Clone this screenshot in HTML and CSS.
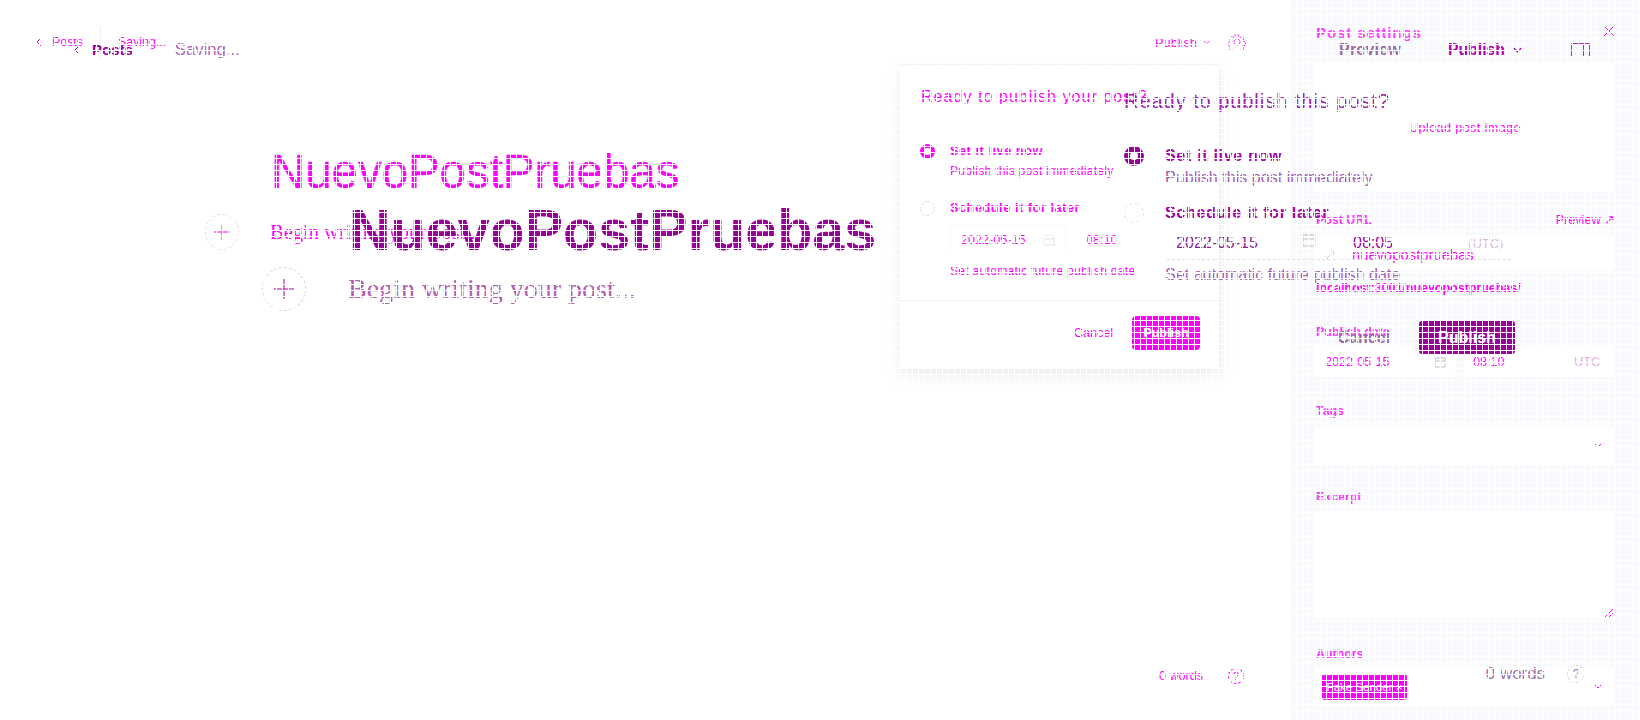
FILE: index.html
```html
<!DOCTYPE html>
<html lang="en">
<head>
<meta charset="utf-8">
<title>Post editor diff</title>
<link rel="stylesheet" href="styles.css">
</head>
<body>
<div class="stage">

  <!-- First rendering -->
  <div class="layer app-a">
    <main class="editor-a">
      <header class="bar-a">
        <svg class="back-a" viewBox="0 0 6 10" width="6" height="10"><path d="M5 1 1 5l4 4" fill="none" stroke="currentColor"/></svg>
        <span class="posts-a">Posts</span>
        <span class="sep-a"></span>
        <span class="saving-a">Saving...</span>
        <span class="spacer"></span>
        <span class="publish-a">Publish</span>
        <svg class="chev-a" viewBox="0 0 8 5" width="7" height="5"><path d="M1 1l3 3 3-3" fill="none" stroke="currentColor"/></svg>
        <svg class="gear-a" viewBox="0 0 18 18" width="18" height="18"><g fill="none" stroke="currentColor" stroke-dasharray="2 1"><circle cx="9" cy="9" r="3"/><path d="M7.5 1.5h3l.5 2 1.8.8 1.8-1 2 2.1-1 1.8.8 1.8 1.6.5v3l-1.9.5-.7 1.8 1 1.8-2 2-1.8-1-1.8.7-.5 1.7h-3l-.5-1.8-1.8-.7-1.8 1-2-2 1-1.8-.7-1.8-1.8-.5v-3l1.8-.5.7-1.8-1-1.8 2-2 1.8 1 1.8-.8z" transform="translate(.2 .2) scale(.96)"/></g></svg>
      </header>
      <h1 class="title-a">NuevoPostPruebas</h1>
      <div class="prompt-a">
        <span class="plus plus-a"><svg viewBox="0 0 16 16" width="16" height="16"><path d="M8 0v16M0 8h16" stroke="currentColor"/></svg></span>
        <span class="begin-a">Begin writing your post...</span>
      </div>
      <footer class="count-a">
        <span>0 words</span>
        <span class="help help-a">?</span>
      </footer>
    </main>

    <aside class="settings">
      <header class="set-head">
        <h2 class="set-title">Post settings</h2>
        <svg class="close" viewBox="0 0 12 12" width="12" height="12"><path d="M1 1l10 10M11 1 1 11" stroke="currentColor"/></svg>
      </header>
      <div class="box box-image"><span>Upload post image</span></div>

      <div class="label-row gap-url"><span class="label">Post URL</span><span class="label-link">Preview ↗</span></div>
      <div class="box box-url">
        <svg class="link-icon" viewBox="0 0 12 12" width="12" height="12"><path d="M2 10l8-8M1 7l4 4M7 1l4 4" stroke="#c8c8c8" fill="none"/></svg>
        <span>nuevopostpruebas</span>
      </div>
      <p class="helper">localhost:3001/nuevopostpruebas/</p>

      <div class="label-row gap-date"><span class="label">Publish date</span></div>
      <div class="date-pair">
        <div class="box box-date">
          <span>2022-05-15</span>
          <svg class="cal" viewBox="0 0 12 12" width="12" height="12"><path d="M1 2h10v9H1zM1 5h10M4 1v2M8 1v2" fill="none" stroke="#c4c4c4"/></svg>
        </div>
        <div class="box box-time"><span>08:10</span><span class="utc">UTC</span></div>
      </div>

      <div class="label-row gap-tags"><span class="label">Tags</span></div>
      <div class="box box-tags">
        <svg class="chev-field" viewBox="0 0 8 5" width="8" height="5"><path d="M1 1l3 3 3-3" fill="none" stroke="currentColor"/></svg>
      </div>

      <div class="label-row gap-excerpt"><span class="label">Excerpt</span></div>
      <div class="box box-excerpt">
        <svg class="grip" viewBox="0 0 8 8" width="8" height="8"><path d="M8 0 0 8M8 4 4 8" stroke="currentColor"/></svg>
      </div>

      <div class="label-row gap-authors"><span class="label">Authors</span></div>
      <div class="box box-authors">
        <span class="author-tag">Fake Sender <span class="tag-x">×</span></span>
        <svg class="chev-field" viewBox="0 0 8 5" width="8" height="5"><path d="M1 1l3 3 3-3" fill="none" stroke="currentColor"/></svg>
      </div>
    </aside>

    <section class="modal-a">
      <h3 class="modal-a-title">Ready to publish your post?</h3>
      <div class="modal-a-body">
        <div class="opt-a opt-a-live">
          <span class="radio-a on"></span>
          <div>
            <div class="opt-a-title">Set it live now</div>
            <div class="opt-a-desc">Publish this post immediately</div>
          </div>
        </div>
        <div class="opt-a opt-a-later">
          <span class="radio-a"></span>
          <div>
            <div class="opt-a-title">Schedule it for later</div>
            <div class="sched-a">
              <div class="sched-a-date"><span>2022-05-15</span><svg class="cal" viewBox="0 0 12 12" width="12" height="12"><path d="M1 2h10v9H1zM1 5h10M4 1v2M8 1v2" fill="none" stroke="#dcdcdc"/></svg></div>
              <div class="sched-a-time">08:10</div>
            </div>
            <div class="opt-a-desc">Set automatic future publish date</div>
          </div>
        </div>
      </div>
      <div class="modal-a-foot">
        <span class="cancel-a">Cancel</span>
        <span class="btn-a">Publish</span>
      </div>
    </section>
  </div>

  <!-- Second rendering, laid over the first -->
  <div class="layer app-b">
    <header class="bar-b">
      <svg class="back-b" viewBox="0 0 6 10" width="6" height="10"><path d="M5 1 1 5l4 4" fill="none" stroke="currentColor"/></svg>
      <span class="posts-b">Posts</span>
      <span class="saving-b">Saving...</span>
      <span class="spacer"></span>
      <span class="preview-b">Preview</span>
      <span class="publish-b">Publish</span>
      <svg class="chev-b" viewBox="0 0 10 6" width="9" height="6"><path d="M1 1l4 4 4-4" fill="none" stroke="currentColor" stroke-width="1.5"/></svg>
      <svg class="panel-b" viewBox="0 0 19 14" width="19" height="14"><path d="M.5.5h18v13H.5zM12.5.5v13" fill="none" stroke="currentColor"/></svg>
    </header>
    <h1 class="title-b">NuevoPostPruebas</h1>
    <div class="prompt-b">
      <span class="plus plus-b"><svg viewBox="0 0 20 20" width="20" height="20"><path d="M10 0v20M0 10h20" stroke="currentColor"/></svg></span>
      <span class="begin-b">Begin writing your post...</span>
    </div>
    <footer class="count-b">
      <span>0 words</span>
      <span class="help help-b">?</span>
    </footer>

    <section class="modal-b">
      <h3 class="modal-b-title">Ready to publish this post?</h3>
      <div class="opt-b opt-b-live">
        <span class="radio-b on"></span>
        <div>
          <div class="opt-b-title">Set it live now</div>
          <div class="opt-b-desc">Publish this post immediately</div>
        </div>
      </div>
      <div class="opt-b opt-b-later">
        <span class="radio-b"></span>
        <div class="opt-b-main">
          <div class="opt-b-title">Schedule it for later</div>
          <div class="sched-b">
            <span class="sched-b-date">2022-05-15</span>
            <svg class="cal-b" viewBox="0 0 14 14" width="14" height="14"><path d="M1 2h12v11H1zM1 6h12M4 1v2M10 1v2" fill="none" stroke="#c4c4c4"/></svg>
            <span class="sched-b-time">08:05</span>
            <span class="sched-b-utc">(UTC)</span>
          </div>
          <div class="opt-b-desc">Set automatic future publish date</div>
        </div>
      </div>
      <div class="modal-b-foot">
        <span class="cancel-b">Cancel</span>
        <span class="btn-b">Publish</span>
      </div>
    </section>
  </div>

  <div class="grid-mask"></div>
</div>
</body>
</html>
```

FILE: styles.css
```css
* { box-sizing: border-box; }
html, body { margin: 0; padding: 0; background: #fff; }
h1, h2, h3, p { margin: 0; font-weight: 400; }

.stage {
  position: relative;
  width: 1640px;
  height: 720px;
  overflow: hidden;
  font-family: "Liberation Sans", Arial, sans-serif;
  background: #fff;
}
.layer { position: absolute; inset: 0; }
.spacer { flex: 1; }

.grid-mask {
  position: absolute;
  inset: 0;
  pointer-events: none;
  background-image:
    linear-gradient(to right, #fff 1px, transparent 1px),
    linear-gradient(to bottom, #fff 1px, transparent 1px);
  background-size: 6px 6px;
  background-position: 0 2px;
}

/* ---------- first rendering ---------- */
.app-a { display: flex; color: #f0f; }
.editor-a { width: 1291px; display: flex; flex-direction: column; }

.bar-a {
  height: 84px;
  display: flex;
  align-items: center;
  padding: 0 45px 0 36px;
  font-size: 12.4px;
}
.back-a { margin-right: 10px; }
.sep-a { width: 1px; height: 35px; background: #e3edf5; margin: 0 17px 0 17px; }
.publish-a { font-size: 12.8px; }
.chev-a { margin: 0 0 0 6px; }
.gear-a { margin-left: 18px; }

.title-a {
  margin: 60px 0 0 271px;
  font-size: 47.4px;
  line-height: 56px;
  -webkit-text-stroke: .4px #f0f;
}
.prompt-a { display: flex; align-items: center; margin: 14px 0 0 205px; }
.plus {
  display: flex;
  align-items: center;
  justify-content: center;
  border-radius: 50%;
  border: 1px dashed #dcdcdc;
}
.plus-a { width: 34px; height: 36px; }
.begin-a {
  margin-left: 31px;
  font-family: "Liberation Serif", "Times New Roman", serif;
  font-size: 20.5px;
}
.count-a {
  margin-top: auto;
  display: flex;
  align-items: center;
  justify-content: flex-end;
  gap: 25px;
  padding: 0 47px 36px 0;
  font-size: 12.6px;
}
.help {
  display: flex;
  align-items: center;
  justify-content: center;
  border-radius: 50%;
  border: 1px dashed currentColor;
}
.help-a { width: 16px; height: 16px; font-size: 11px; }

/* settings panel */
.settings {
  width: 349px;
  padding: 0 25px 0 24px;
  background: #f8f9fc;
  display: flex;
  flex-direction: column;
}
.set-head {
  height: 63px;
  flex: none;
  display: flex;
  justify-content: space-between;
  padding: 25px 0 0 1px;
}
.set-title { font-size: 15.2px; line-height: 15px; font-weight: 700; letter-spacing: .8px; color: #f4f; }
.close { margin-top: 0; }
.box {
  flex: none;
  background: #fff;
  border-radius: 3px;
  display: flex;
  align-items: center;
  font-size: 12.6px;
}
.label-row {
  flex: none;
  display: flex;
  justify-content: space-between;
  padding-left: 1px;
  line-height: 16px;
  font-size: 12.4px;
}
.label { font-weight: 700; color: #f3f; }
.label-link { font-size: 12.6px; }

.box-image { height: 129px; justify-content: center; letter-spacing: .4px; }
.gap-url { margin: 20px 0 7px; }
.box-url { height: 36px; padding-left: 9px; gap: 16px; padding-top: 4px; font-size: 14.8px; }
.helper { margin: 9px 0 28px 1px; line-height: 16px; font-size: 12.6px; font-weight: 700; letter-spacing: -.08px; white-space: nowrap; }
.gap-date { margin: 0 0 6px; }
.date-pair { flex: none; display: flex; justify-content: space-between; }
.box-date { width: 141px; height: 31px; padding: 0 10px; justify-content: space-between; }
.box-time { width: 151px; height: 31px; padding: 0 15px 0 9px; justify-content: space-between; }
.utc { color: #e6a6e6; }
.gap-tags { margin: 26px 0 8px; }
.box-tags { height: 37px; justify-content: flex-end; padding-right: 13px; }
.gap-excerpt { margin: 25px 0 6px; }
.box-excerpt { height: 107px; align-items: flex-end; justify-content: flex-end; padding: 0 2px 1px 0; }
.gap-authors { margin: 28px 0 5px; }
.box-authors { height: 39px; padding: 0 13px 0 7px; justify-content: space-between; }
.author-tag {
  width: 85px;
  height: 26px;
  line-height: 26px;
  text-align: center;
  border-radius: 3px;
  background: #f0f;
  color: #fff;
  font-size: 11.5px;
  white-space: nowrap;
}

/* popover */
.modal-a {
  position: absolute;
  left: 900px;
  top: 64px;
  width: 320px;
  height: 306px;
  background: #fff;
  border: 1px solid #e9eff4;
  border-radius: 4px;
  box-shadow: 0 6px 18px rgba(0, 0, 0, .08);
  display: flex;
  flex-direction: column;
}
.modal-a-title {
  height: 58px;
  flex: none;
  padding: 22px 0 0 20px;
  font-size: 16px;
  line-height: 20px;
  letter-spacing: 1.05px;
  white-space: nowrap;
  border-bottom: 1px solid #e6edf3;
}
.modal-a-body { height: 177px; flex: none; padding: 20px 0 0 19px; }
.opt-a { display: grid; grid-template-columns: 15px 1fr; column-gap: 15px; }
.opt-a-live { margin-bottom: 21px; }
.radio-a { width: 15px; height: 15px; border-radius: 50%; border: 1px solid #e4e4e4; margin-top: 1px; }
.radio-a.on { border: 4px solid #f0f; background: #fff; }
.opt-a-title { font-size: 12.7px; line-height: 16px; font-weight: 700; letter-spacing: .55px; }
.opt-a-desc { margin-top: 4px; font-size: 12.2px; line-height: 16px; letter-spacing: .22px; white-space: nowrap; }
.sched-a { display: flex; margin-top: 9px; height: 30px; font-size: 12.6px; }
.sched-a-date {
  width: 116px;
  display: flex;
  align-items: center;
  justify-content: space-between;
  padding: 0 10px;
  border: 1px solid #f8f8f8;
}
.sched-a-time { width: 100px; padding-left: 20px; line-height: 30px; }
.sched-a + .opt-a-desc { margin-top: 8px; }
.modal-a-foot {
  flex: 1;
  display: flex;
  align-items: center;
  justify-content: flex-end;
  gap: 19px;
  padding: 0 19px 5px 0;
  border-top: 1px solid #eceff2;
  font-size: 12.6px;
}
.btn-a {
  width: 68px;
  height: 34px;
  line-height: 34px;
  text-align: center;
  border-radius: 4px;
  background: #f0f;
  color: #fff;
  font-weight: 700;
}

/* ---------- second rendering ---------- */
.app-b { color: #a400a4; pointer-events: none; }
.bar-b {
  height: 99px;
  display: flex;
  align-items: center;
  padding: 0 50px 0 74px;
}
.back-b { margin-right: 12px; }
.posts-b { font-size: 15px; font-weight: 700; color: #9a009a; }
.saving-b { margin-left: 42px; font-size: 16.7px; color: #b060b8; }
.preview-b { font-size: 16px; font-weight: 700; letter-spacing: .2px; color: #9a6aa0; margin-right: 47px; }
.publish-b { font-size: 15.8px; font-weight: 700; color: #b000b0; }
.chev-b { margin: 0 49px 0 8px; }
.panel-b { margin-top: 0; color: #b030b0; }

.title-b {
  margin: 101px 0 0 349px;
  font-size: 57.5px;
  line-height: 60px;
  font-weight: 700;
  color: #909;
}
.prompt-b { display: flex; align-items: center; margin: 7px 0 0 262px; }
.plus-b { width: 44px; height: 44px; border-color: #d0d0d0; }
.begin-b {
  margin-left: 42px;
  font-family: "Liberation Serif", "Times New Roman", serif;
  font-size: 28px;
  color: #b060b0;
}
.count-b {
  position: absolute;
  right: 55px;
  top: 664px;
  display: flex;
  align-items: center;
  gap: 22px;
  font-size: 16.9px;
  color: #a070a8;
}
.help-b { width: 18px; height: 18px; font-size: 12px; border-color: #c0c0c0; }

.modal-b {
  position: absolute;
  left: 1124px;
  top: 90px;
  width: 391px;
  height: 264px;
  display: flex;
  flex-direction: column;
}
.modal-b-title { font-size: 20px; line-height: 22px; letter-spacing: .95px; color: #a020a8; white-space: nowrap; }
.opt-b { display: grid; grid-template-columns: 20px 1fr; column-gap: 21px; }
.opt-b-live { margin-top: 35px; }
.opt-b-later { margin-top: 18px; }
.radio-b { width: 20px; height: 20px; margin-top: -1px; border-radius: 50%; border: 1px dashed #dcdcdc; }
.radio-b.on { border: 6px solid #909; }
.opt-b-title { font-size: 16px; line-height: 18px; font-weight: 700; letter-spacing: .7px; white-space: nowrap; }
.opt-b-desc { margin-top: 3px; font-size: 16.1px; line-height: 18px; color: #a060b0; white-space: nowrap; }
.opt-b-main { width: 346px; }
.sched-b {
  display: flex;
  align-items: center;
  height: 38px;
  margin-left: 2px;
  padding: 5px 0 0 9px;
  font-size: 16px;
  border-bottom: 1px dashed #ddd;
}
.sched-b-date { width: 126px; color: #8a2090; }
.sched-b-time { margin-left: 37px; color: #a000a0; }
.cal-b { flex: none; margin-top: -6px; }
.sched-b-utc { margin-left: 75px; font-size: 13px; color: #d8b8d8; }
.sched-b + .opt-b-desc { margin-top: 5px; }
.modal-b-foot {
  position: absolute;
  left: 0;
  right: 0;
  bottom: 0;
  display: flex;
  align-items: center;
  justify-content: flex-end;
  gap: 29px;
  font-size: 16px;
}
.cancel-b { font-weight: 700; color: #9a6aa0; }
.btn-b {
  width: 96px;
  height: 33px;
  line-height: 33px;
  text-align: center;
  border-radius: 3px;
  background: #909;
  color: #fff;
  font-weight: 700;
}
```
